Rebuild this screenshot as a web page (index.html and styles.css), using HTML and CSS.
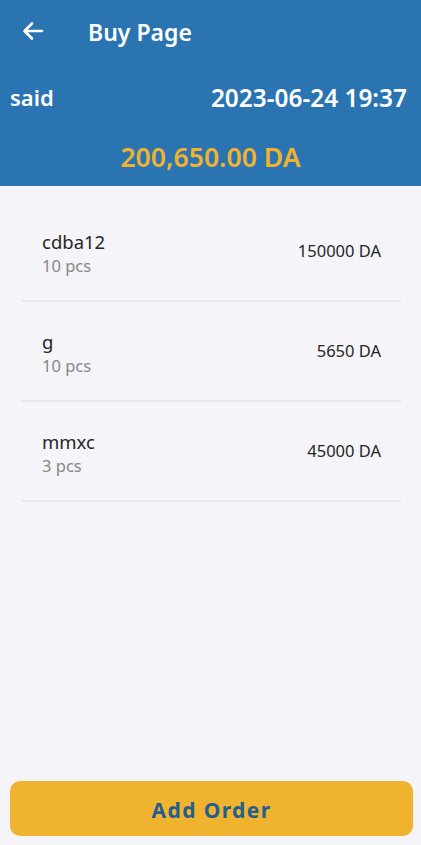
FILE: index.html
```html
<!DOCTYPE html>
<html>
<head>
<meta charset="utf-8">
<link rel="stylesheet" href="styles.css">
</head>
<body>
<div class="page">
  <header class="header">
    <div class="topbar">
      <svg class="back" width="22" height="20" viewBox="0 0 22 20"><path d="M20 10H3M10 2.5L2.5 10L10 17.5" fill="none" stroke="#fff" stroke-width="2.6" stroke-linecap="round" stroke-linejoin="round"/></svg>
      <span class="title">Buy Page</span>
    </div>
    <div class="info">
      <span class="name">said</span>
      <span class="date">2023-06-24 19:37</span>
    </div>
    <div class="total">200,650.00 DA</div>
  </header>
  <main class="list">
    <div class="item">
      <div class="left"><div class="pname">cdba12</div><div class="qty">10 pcs</div></div>
      <div class="price">150000 DA</div>
    </div>
    <div class="item">
      <div class="left"><div class="pname">g</div><div class="qty">10 pcs</div></div>
      <div class="price">5650 DA</div>
    </div>
    <div class="item">
      <div class="left"><div class="pname">mmxc</div><div class="qty">3 pcs</div></div>
      <div class="price">45000 DA</div>
    </div>
  </main>
  <div class="footer">
    <button class="add">Add Order</button>
  </div>
</div>
</body>
</html>
```
FILE: styles.css
```css
* { box-sizing: border-box; }
html, body { margin: 0; padding: 0; }
body {
  background: #f4f4f9;
  font-family: "Noto Sans", "Open Sans", sans-serif;
  width: 421px;
  height: 845px;
  overflow: hidden;
}
.page {
  display: flex;
  flex-direction: column;
  height: 845px;
}
.header {
  background: #2a75b1;
  height: 186px;
  color: #fff;
  display: flex;
  flex-direction: column;
}
.topbar {
  display: flex;
  align-items: center;
  height: 64px;
  padding-left: 22px;
}
.back { display: block; margin-top: -2px; }
.title {
  font-weight: 600;
  font-size: 23px;
  margin-left: 44px;
  margin-top: -1px;
}
.info {
  display: flex;
  justify-content: space-between;
  align-items: center;
  padding: 0 14px 0 10px;
  height: 66px;
}
.name {
  font-weight: 600;
  font-size: 22px;
}
.date {
  font-weight: 600;
  font-size: 24.4px;
}
.total {
  text-align: center;
  color: #f0b330;
  font-weight: 600;
  font-size: 26.6px;
  height: 56px;
  line-height: 54px;
}
.list {
  flex: 1;
  padding: 0 20px 0 22px;
  margin-top: 16px;
}
.item {
  display: flex;
  justify-content: space-between;
  align-items: center;
  height: 100px;
  padding: 0 20px;
  border-bottom: 2px solid #e6e6eb;
}
.left { margin-top: 6px; }
.pname {
  font-size: 18.5px;
  color: #262626;
  line-height: 24px;
}
.qty {
  font-size: 16.5px;
  color: #888;
  line-height: 24px;
}
.price {
  font-size: 16.5px;
  color: #262626;
  margin-top: -2px;
}
.footer {
  padding: 0 8px 9px 10px;
}
.add {
  width: 100%;
  height: 55px;
  border: none;
  border-radius: 10px;
  background: #f0b330;
  color: #245e8c;
  font-family: "Noto Sans", "Open Sans", sans-serif;
  font-weight: 700;
  font-size: 21px;
  letter-spacing: 1.4px;
  padding-top: 3px;
}
```
